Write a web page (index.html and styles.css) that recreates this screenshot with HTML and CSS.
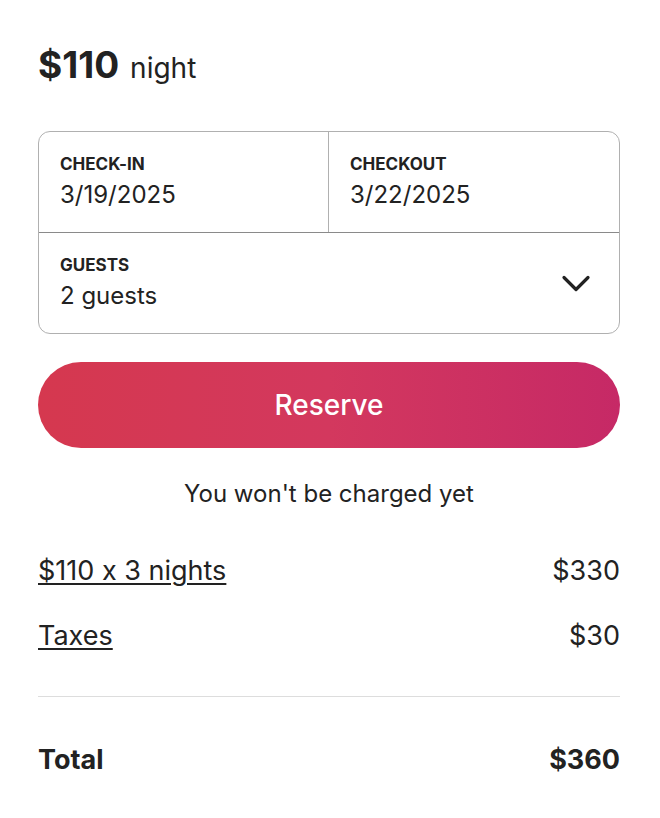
FILE: index.html
```html
<!DOCTYPE html>
<html lang="en">
<head>
<meta charset="utf-8">
<title>Booking</title>
<link rel="stylesheet" href="styles.css">
</head>
<body>
<div class="card">
  <div class="price"><span class="amount">$110</span><span class="unit">night</span></div>

  <div class="picker">
    <div class="dates">
      <div class="cell cell-left">
        <div class="label">CHECK-IN</div>
        <div class="value">3/19/2025</div>
      </div>
      <div class="cell">
        <div class="label">CHECKOUT</div>
        <div class="value">3/22/2025</div>
      </div>
    </div>
    <div class="cell guests">
      <div>
        <div class="label">GUESTS</div>
        <div class="value">2 guests</div>
      </div>
      <svg class="chevron" viewBox="0 0 32 32" width="32" height="32" aria-hidden="true">
        <path d="M4 11.5 L16 23.5 L28 11.5" fill="none" stroke="#222" stroke-width="3.2" stroke-linecap="round" stroke-linejoin="round"/>
      </svg>
    </div>
  </div>

  <button class="reserve">Reserve</button>
  <p class="note">You won't be charged yet</p>

  <div class="lines">
    <div class="line"><span class="link">$110 x 3 nights</span><span>$330</span></div>
    <div class="line"><span class="link">Taxes</span><span>$30</span></div>
  </div>

  <div class="total"><span>Total</span><span>$360</span></div>
</div>
</body>
</html>
```

FILE: styles.css
```css
html, body {
  margin: 0;
  padding: 0;
  background: #ffffff;
}

body {
  font-family: Inter, "Noto Sans", "Liberation Sans", sans-serif;
  font-feature-settings: "calt" 0;
  color: #222222;
}

.card {
  box-sizing: border-box;
  width: 660px;
  height: 818px;
  background: #ffffff;
  border-radius: 12px;
  padding: 43px 40px 0 38px;
  overflow: hidden;
}

.price {
  display: flex;
  align-items: baseline;
  gap: 11px;
  line-height: 44px;
  height: 44px;
  white-space: nowrap;
}

.amount {
  font-size: 37px;
  font-weight: 700;
  letter-spacing: 0;
}

.unit {
  font-size: 28px;
  font-weight: 400;
}

.picker {
  margin-top: 44px;
  border: 1px solid #b0b0b0;
  border-radius: 12px;
}

.dates {
  display: grid;
  grid-template-columns: 1fr 1fr;
  border-bottom: 1px solid #8a8a8a;
}

.cell {
  padding: 22px 21px 24px 21px;
}

.cell-left {
  border-right: 1px solid #b0b0b0;
}

.label {
  font-size: 17px;
  line-height: 20px;
  font-weight: 700;
  color: #222222;
}

.value {
  margin-top: 7px;
  font-size: 24px;
  line-height: 28px;
  color: #222222;
}

.cell .value {
  margin-bottom: -1px;
}

.guests {
  display: flex;
  align-items: center;
  justify-content: space-between;
  padding-right: 27px;
}

.chevron {
  display: block;
  flex: none;
}

.reserve {
  display: block;
  box-sizing: border-box;
  width: 100%;
  height: 86px;
  margin-top: 28px;
  border: none;
  border-radius: 43px;
  background: linear-gradient(90deg, #d5384f 0%, #d3385e 50%, #c62966 100%);
  color: #ffffff;
  font-family: Inter, "Noto Sans", "Liberation Sans", sans-serif;
  font-size: 28px;
  font-weight: 500;
  cursor: pointer;
}

.note {
  margin: 32px 0 0 0;
  text-align: center;
  font-size: 24px;
  line-height: 28px;
}

.lines {
  margin-top: 47px;
  display: flex;
  flex-direction: column;
  gap: 33px;
  padding-bottom: 44px;
  border-bottom: 1px solid #dddddd;
}

.line {
  display: flex;
  justify-content: space-between;
  font-size: 27px;
  line-height: 32px;
}

.link {
  text-decoration: underline;
  text-decoration-thickness: 1.5px;
  text-underline-offset: 3px;
}

.total {
  margin-top: 47px;
  display: flex;
  justify-content: space-between;
  font-size: 27px;
  line-height: 32px;
  font-weight: 700;
}
```
